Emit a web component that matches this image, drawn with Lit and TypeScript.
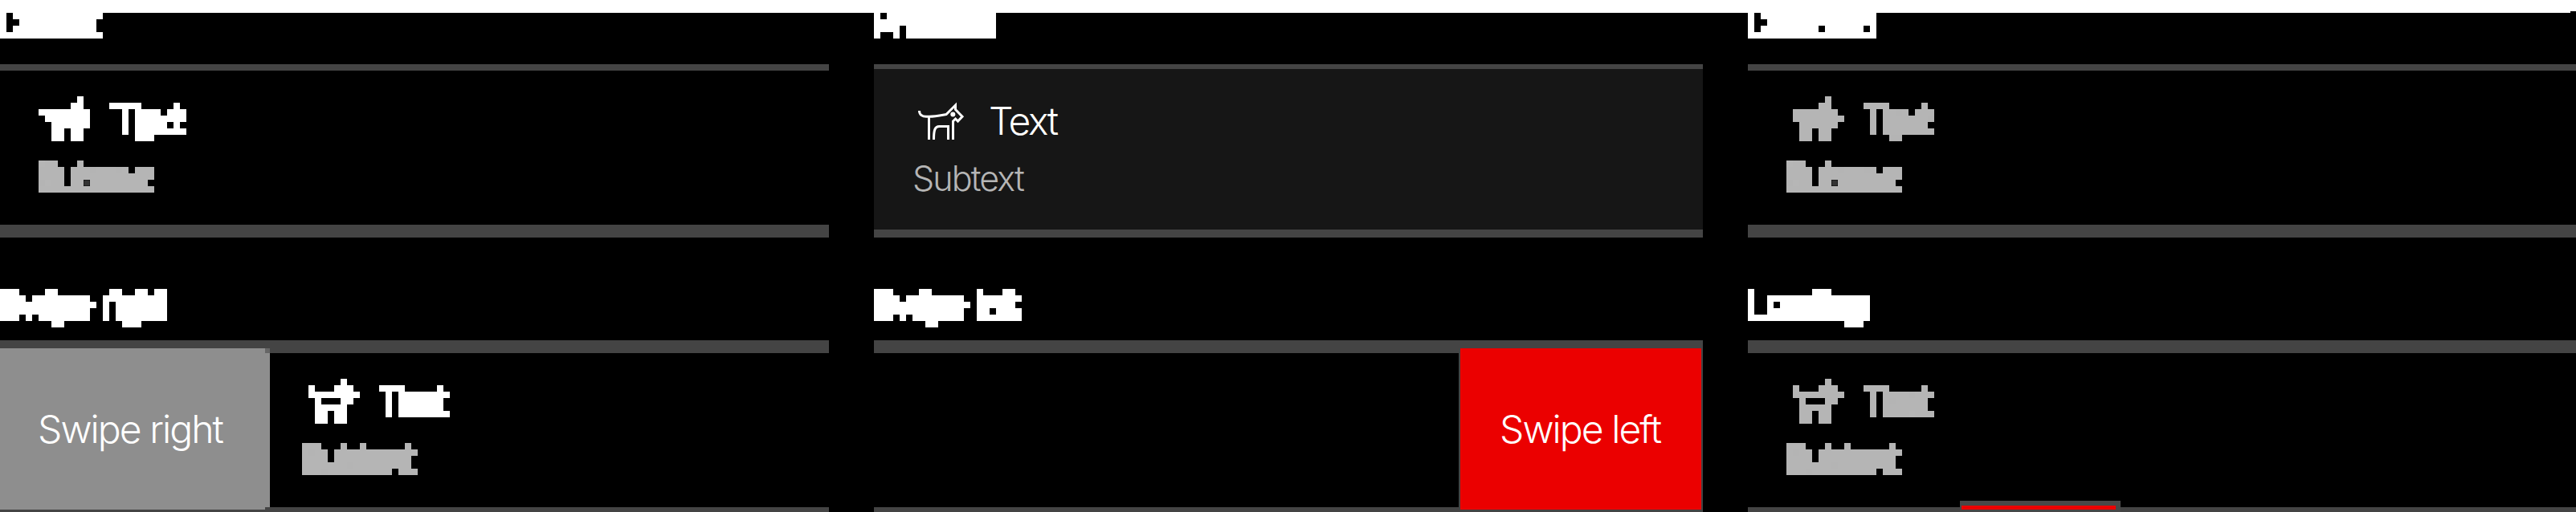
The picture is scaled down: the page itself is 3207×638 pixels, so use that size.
import { LitElement, html, css, svg, nothing } from "lit";
import { customElement, property } from "lit/decorators.js";

/* Terrier silhouettes on an 8px cell grid, one string per row. */
const SOLID_A = ["......#.", ".....##.", "########", ".#######", "..######", "..##.##.", "..##.##."];
const SOLID_B = [".....#..", "....##..", "#######.", "########", ".######.", ".##.##..", ".##.##.."];
const OPEN = [".....#..", "#...###.", "########", ".#...##.", ".#####..", ".##.##..", ".##.##.."];

@customElement("dog-icon")
class DogIcon extends LitElement {
  @property({ attribute: false }) cells: string[] | null = null;
  static styles = css`
    :host { display: block; width: 64px; height: 56px; flex: none; }
    svg { display: block; width: 64px; height: 56px; overflow: visible; }
    .line { fill: none; stroke: currentColor; stroke-width: 3; }
    .fill { fill: currentColor; }
  `;
  render() {
    if (this.cells) {
      return html`<svg viewBox="0 0 64 56" shape-rendering="crispEdges">${this.cells.map((row, y) =>
        [...row].map((c, x) => c === "#" ? svg`<rect class="fill" x=${x * 8} y=${y * 8} width="8" height="8"/>` : nothing))}</svg>`;
    }
    return html`<svg viewBox="0 0 64 56">
      <path class="line" d="M.5 18C.5 23 4.500 25.300 9 25.300H13C20 25 28 23.500 34 22.500L45.500 11V16.500L54 25.300L48.500 31L45.500 28L42.500 31V54"/>
      <path class="line" d="M12.500 25.300V54M18.500 54C18.500 43 19.500 37.500 25.500 37.500H36.500V54"/>
      <circle class="fill" cx="42.300" cy="22.500" r="3"/>
    </svg>`;
  }
}

@customElement("app-root")
class AppRoot extends LitElement {
  static styles = css`
    :host { display: block; position: relative; width: 3207px; height: 638px; overflow: hidden; background: #000; color: #fff; font-family: Inter, "Liberation Sans", sans-serif; font-weight: 300; }
    * { box-sizing: border-box; }
    .defs { position: absolute; width: 0; height: 0; }
    .band { height: 16px; padding-left: 3200px; background: #fff; display: flex; align-items: flex-end; }
    .band i { width: 7px; height: 2px; background: #000; }
    .grid { display: grid; grid-template-columns: 1032px 1032px 1031px; column-gap: 56px; }
    .cell { display: flex; flex-direction: column; }
    .title { height: 64px; }
    .row2 .title { height: 128px; padding-top: 56px; }
    .title span { display: block; width: 400px; height: 64px; margin-top: -16px; font-size: 44px; line-height: 59px; letter-spacing: -2.400px; white-space: nowrap; filter: url(#blocks); }
    .first-title span { letter-spacing: -3.400px; }
    .row2 .title span { margin-top: 0; line-height: 54px; letter-spacing: -2.700px; word-spacing: 5px; }
    .card { height: 216px; border-top: 8px solid #444; border-bottom: 16px solid #444; }
    .card.pressed { background: #161616; border-top-width: 6px; border-bottom-width: 10px; }
    .row2 .card { height: 224px; border-top-width: 16px; display: flex; }
    .content { padding: 32px 48px 0; }
    .pressed .content { padding-top: 34px; }
    .shift .content { padding-left: 40px; }
    .head { display: flex; height: 56px; padding-left: 8px; }
    .first .head { padding-left: 0; }
    .label { width: 160px; height: 64px; margin-left: 16px; padding-left: 7px; font-size: 48px; line-height: 61px; letter-spacing: -2.300px; white-space: nowrap; }
    .first .label { margin-left: 24px; padding-left: 5px; }
    .row2 .label { line-height: 56px; }
    .sub { display: block; width: 240px; height: 64px; margin-top: 16px; font-size: 43px; line-height: 60px; letter-spacing: -1.900px; color: #b5b5b5; white-space: nowrap; }
    .row2 .sub { line-height: 54px; }
    .mosaic .label, .mosaic .sub { filter: url(#blocks); }
    .dim { color: #b5b5b5; }
    .action { flex: none; display: flex; align-items: center; font-size: 48px; letter-spacing: -1.950px; white-space: nowrap; height: 201px; margin-top: -6.500px; }
    .right { width: 336px; padding-left: 47px; background: #8e8e8e; position: relative; }
    .nick { position: absolute; right: 0; width: 6px; background: #666; }
    .nick.top { top: 0; height: 6px; }
    .nick.bottom { bottom: 0; height: 3px; background: #444; }
    .left { width: 304px; padding-left: 49px; margin-left: auto; background: #eb0000; border: solid #444; border-width: 0 2px; letter-spacing: -1.950px; }
    .loader { position: absolute; left: 2440px; top: 624px; width: 200px; height: 14px; padding: 6px 6px 3px 2px; background: #484848; }
    .bar { height: 5px; background: #eb0000; }
  `;

  private body(cells: string[] | null) {
    return html`<div class="content">
      <div class="head"><dog-icon .cells=${cells}></dog-icon><span class="label">Text</span></div>
      <span class="sub">Subtext</span>
    </div>`;
  }

  render() {
    return html`
      <svg class="defs"><filter id="blocks" filterUnits="userSpaceOnUse" primitiveUnits="userSpaceOnUse" x="-8" y="-8" width="416" height="88" color-interpolation-filters="sRGB">
        <feFlood x="4" y="4" width="1" height="1" flood-color="#fff" result="dot"/>
        <feOffset in="dot" dx="0" dy="0" x="0" y="0" width="8" height="8" result="unit"/>
        <feTile in="unit" result="dots"/>
        <feMorphology in="SourceGraphic" operator="dilate" radius="3" result="w1"/>
        <feOffset in="w1" dx="1" dy="0" result="w2"/>
        <feMerge result="w3"><feMergeNode in="w1"/><feMergeNode in="w2"/></feMerge>
        <feOffset in="w3" dx="0" dy="1" result="w4"/>
        <feMerge result="wide"><feMergeNode in="w3"/><feMergeNode in="w4"/></feMerge>
        <feComposite in="wide" in2="dots" operator="in"/>
        <feComponentTransfer><feFuncA type="linear" slope="40" intercept="-4"/></feComponentTransfer>
        <feMorphology operator="dilate" radius="3" result="a"/>
        <feOffset in="a" dx="-1" dy="0" result="b"/>
        <feMerge result="c"><feMergeNode in="a"/><feMergeNode in="b"/></feMerge>
        <feOffset in="c" dx="0" dy="-1" result="d"/>
        <feMerge><feMergeNode in="c"/><feMergeNode in="d"/></feMerge>
      </filter></svg>
      <div class="band"><i></i></div>
      <div class="grid">
        <section class="cell"><div class="title first-title"><span>Default</span></div>
          <div class="card mosaic first">${this.body(SOLID_A)}</div></section>
        <section class="cell"><div class="title"><span>Pressed</span></div>
          <div class="card pressed">${this.body(null)}</div></section>
        <section class="cell"><div class="title"><span>Disabled</span></div>
          <div class="card mosaic dim">${this.body(SOLID_B)}</div></section>
      </div>
      <div class="grid row2">
        <section class="cell"><div class="title"><span>Swipe right</span></div>
          <div class="card mosaic shift"><div class="action right">Swipe right<i class="nick top"></i><i class="nick bottom"></i></div>${this.body(OPEN)}</div></section>
        <section class="cell"><div class="title"><span>Swipe left</span></div>
          <div class="card"><div class="action left">Swipe left</div></div></section>
        <section class="cell"><div class="title"><span>Loading</span></div>
          <div class="card mosaic dim">${this.body(OPEN)}</div></section>
      </div>
      <div class="loader"><div class="bar"></div></div>`;
  }
}
